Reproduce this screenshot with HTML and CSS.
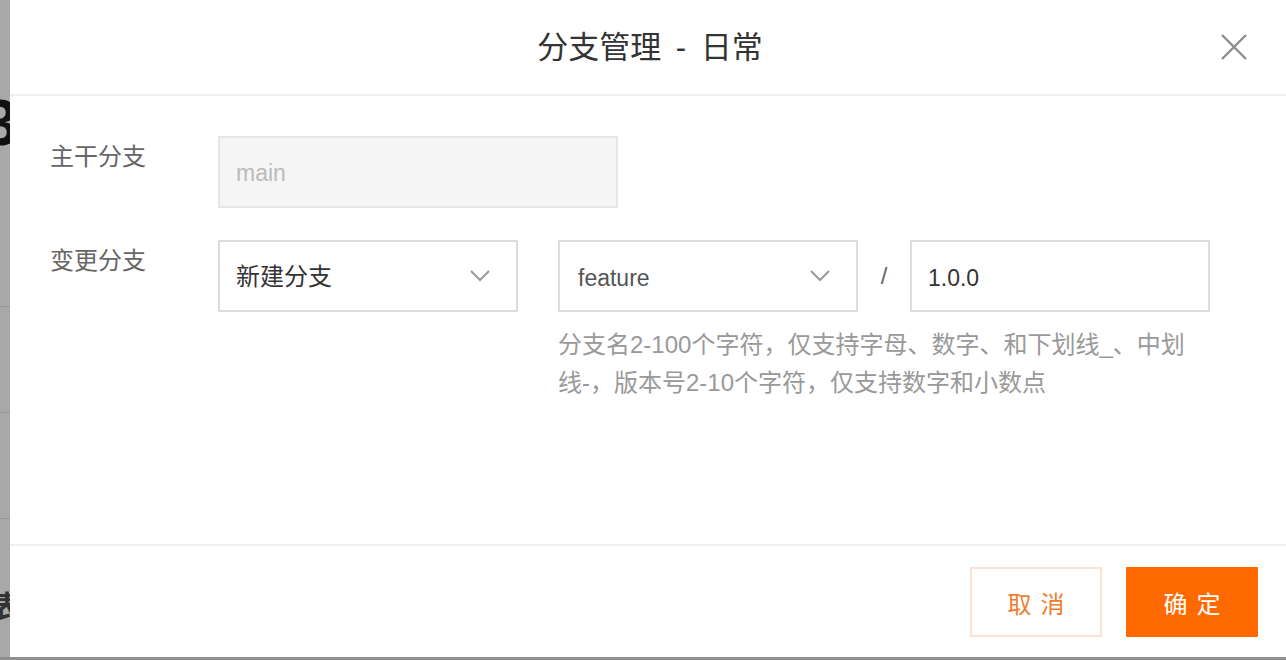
FILE: index.html
```html
<!DOCTYPE html>
<html lang="zh-CN">

<head>
    <meta charset="UTF-8">
    <meta name="viewport" content="width=device-width, initial-scale=1.0">
    <title>分支管理 - 日常</title>
    <link rel="stylesheet" href="styles.css">
</head>

<body>
    <div class="page">
        <!-- край страницы под модальным окном -->
        <div class="page-edge">
            <div class="edge-row edge-row-top"><span class="edge-glyph">3</span></div>
            <div class="edge-row"></div>
            <div class="edge-row"></div>
            <div class="edge-row edge-row-last"><span class="edge-glyph-small">表</span></div>
        </div>

        <div class="dialog">
            <div class="dialog-header">
                <h2 class="dialog-title">分支管理 - 日常</h2>
                <button class="dialog-close" aria-label="关闭">
                    <svg width="26" height="26" viewBox="0 0 26 26">
                        <path d="M1 1 L25 25 M25 1 L1 25" stroke="#8c8c8c" stroke-width="2.4" fill="none" />
                    </svg>
                </button>
            </div>

            <div class="dialog-body">
                <div class="form-row">
                    <label class="form-label">主干分支</label>
                    <div class="form-control">
                        <input class="text-input text-input-wide" value="main" disabled>
                    </div>
                </div>

                <div class="form-row">
                    <label class="form-label">变更分支</label>
                    <div class="form-control branch-control">
                        <div class="select">
                            <span class="select-value">新建分支</span>
                            <svg class="chevron" width="20" height="12" viewBox="0 0 20 12">
                                <polyline points="1,1 10,10 19,1" stroke="#999" stroke-width="2" fill="none" />
                            </svg>
                        </div>

                        <div class="branch-name">
                            <div class="branch-inputs">
                                <div class="select select-prefix">
                                    <span class="select-value">feature</span>
                                    <svg class="chevron" width="20" height="12" viewBox="0 0 20 12">
                                        <polyline points="1,1 10,10 19,1" stroke="#999" stroke-width="2" fill="none" />
                                    </svg>
                                </div>
                                <span class="slash">/</span>
                                <input class="text-input text-input-version" value="1.0.0">
                            </div>
                            <p class="hint">分支名2-100个字符，仅支持字母、数字、和下划线_、中划线-，版本号2-10个字符，仅支持数字和小数点</p>
                        </div>
                    </div>
                </div>
            </div>

            <div class="dialog-footer">
                <button class="btn btn-cancel">取消</button>
                <button class="btn btn-primary">确定</button>
            </div>
        </div>
    </div>
</body>

</html>
```

FILE: styles.css
```css
body {
    margin: 0;
    height: 660px;
    overflow: hidden;
    background-color: #8f8f8f;
    font-family: "Liberation Sans", "Noto Sans CJK SC", sans-serif;
}

.page {
    display: flex;
    height: 657px;
}

/* Полоска страницы, видная слева от окна */
.page-edge {
    width: 10px;
    flex-shrink: 0;
    display: flex;
    flex-direction: column;
    background-color: #a8a8a8;
    overflow: hidden;
}

.edge-row {
    height: 105px;
    border-bottom: 1px solid #979797;
    display: flex;
    justify-content: flex-end;
}

.edge-row-top {
    height: 306px;
    align-items: flex-start;
}

.edge-row-last {
    flex: 1;
    border-bottom: none;
    align-items: flex-start;
}

.edge-glyph {
    margin-top: 88px;
    margin-right: -8px;
    font-size: 64px;
    font-weight: bold;
    line-height: 70px;
    color: #111;
}

.edge-glyph-small {
    margin-top: 68px;
    margin-right: -12px;
    font-size: 30px;
    font-weight: bold;
    line-height: 40px;
    color: #333;
}

.dialog {
    flex: 1;
    display: flex;
    flex-direction: column;
    background-color: #fff;
}

.dialog-header {
    position: relative;
    height: 94px;
    border-bottom: 2px solid #efefef;
    display: flex;
    align-items: center;
    justify-content: center;
}

.dialog-title {
    margin: 0 0 6px 0;
    font-size: 31px;
    font-weight: normal;
    word-spacing: 6px;
    color: #333;
    padding-left: 4px;
}

.dialog-close {
    position: absolute;
    right: 39px;
    top: 34px;
    padding: 0;
    border: none;
    background: none;
    width: 26px;
    height: 26px;
    cursor: pointer;
}

.dialog-body {
    flex: 1;
    padding: 40px 40px 0 40px;
}

.form-row {
    display: flex;
    align-items: flex-start;
    margin-bottom: 32px;
}

.form-label {
    width: 168px;
    flex-shrink: 0;
    font-size: 24px;
    line-height: 42px;
    color: #666;
}

.form-control {
    display: flex;
}

.branch-control {
    gap: 40px;
    align-items: flex-start;
}

.text-input {
    box-sizing: border-box;
    width: 300px;
    height: 72px;
    padding: 2px 16px 0 16px;
    border: 2px solid #dcdcdc;
    font-family: inherit;
    font-size: 23px;
    color: #333;
    outline: none;
    background-color: #fff;
}

.text-input-wide {
    width: 400px;
}

.text-input-version {
    padding-top: 4px;
}

.text-input:disabled {
    background-color: #f5f5f5;
    border-color: #e6e6e6;
    color: #bbb;
}

.select {
    box-sizing: border-box;
    width: 300px;
    height: 72px;
    padding: 0 26px 0 16px;
    border: 2px solid #dcdcdc;
    display: flex;
    align-items: center;
    justify-content: space-between;
    font-size: 24px;
    color: #333;
    cursor: pointer;
}

.select-value {
    margin-top: -4px;
}

.select-prefix {
    padding-left: 18px;
    color: #555;
}

.select-prefix .select-value {
    margin-top: 4px;
    font-size: 23px;
}

.branch-inputs {
    display: flex;
    align-items: center;
}

.slash {
    width: 52px;
    text-align: center;
    font-size: 24px;
    color: #666;
}

.hint {
    width: 652px;
    margin: 14px 0 0 0;
    font-size: 24px;
    line-height: 38px;
    color: #999;
}

.dialog-footer {
    border-top: 2px solid #efefef;
    padding: 21px 28px 20px 0;
    display: flex;
    justify-content: flex-end;
    gap: 24px;
}

.btn {
    box-sizing: border-box;
    width: 132px;
    height: 70px;
    font-family: inherit;
    font-size: 24px;
    letter-spacing: 9px;
    text-indent: 9px;
    cursor: pointer;
}

.btn-cancel {
    border: 2px solid #fde2cf;
    background-color: #fff;
    color: #f07c33;
}

.btn-primary {
    border: none;
    background-color: #ff6a00;
    color: #fff;
}
```
